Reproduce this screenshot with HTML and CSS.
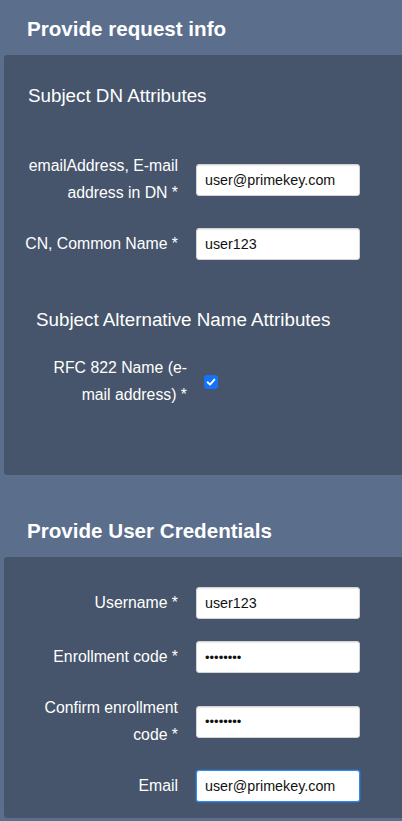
FILE: index.html
```html
<!DOCTYPE html>
<html lang="en">
<head>
<meta charset="utf-8">
<title>Request info</title>
<link rel="stylesheet" href="styles.css">
</head>
<body>
<h2 class="section-title">Provide request info</h2>
<div class="panel panel--request">
  <h3 class="group-title">Subject DN Attributes</h3>
  <div class="rows">
    <div class="row">
      <label class="label" for="f-email-dn">emailAddress, E-mail address in DN *</label>
      <input class="field" id="f-email-dn" type="text" value="user@primekey.com">
    </div>
    <div class="row">
      <label class="label" for="f-cn">CN, Common Name *</label>
      <input class="field" id="f-cn" type="text" value="user123">
    </div>
  </div>
  <h3 class="group-title group-title--alt">Subject Alternative Name Attributes</h3>
  <div class="row row--check">
    <label class="label">RFC 822 Name (e-mail address) *</label>
    <span class="checkbox"><svg width="14" height="14" viewBox="0 0 14 14"><path d="M3.6 7.3 L6 9.6 L10.4 4.6" fill="none" stroke="#fff" stroke-width="1.9" stroke-linecap="round" stroke-linejoin="round"/></svg></span>
  </div>
</div>

<h2 class="section-title">Provide User Credentials</h2>
<div class="panel panel--creds">
  <div class="rows">
    <div class="row">
      <label class="label" for="f-user">Username *</label>
      <input class="field" id="f-user" type="text" value="user123">
    </div>
    <div class="row">
      <label class="label" for="f-code">Enrollment code *</label>
      <input class="field field--secret" id="f-code" type="password" value="12345678">
    </div>
    <div class="row">
      <label class="label" for="f-code2">Confirm enrollment code *</label>
      <input class="field field--secret" id="f-code2" type="password" value="12345678">
    </div>
    <div class="row">
      <label class="label" for="f-mail">Email</label>
      <input class="field field--focus" id="f-mail" type="text" value="user@primekey.com">
    </div>
  </div>
</div>
</body>
</html>
```
FILE: styles.css
```css
html, body {
  margin: 0;
  padding: 0;
}
body {
  background: #5b6f8d;
  font-family: "Liberation Sans", Arial, sans-serif;
  color: #ffffff;
  overflow: hidden;
}
.section-title {
  margin: 0;
  padding: 17px 0 14px 27px;
  font-size: 20.6px;
  line-height: 24px;
  font-weight: bold;
  color: #ffffff;
}
.panel {
  margin-left: 4px;
  background: #46556b;
  border-radius: 3px 0 0 3px;
}
.panel--request {
  padding: 30px 0 67px 0;
  margin-bottom: 27px;
}
.panel--creds {
  padding: 30px 0 16px 0;
}
.group-title {
  margin: 0 0 46px 24px;
  font-size: 18.8px;
  line-height: 22px;
  font-weight: normal;
}
.group-title--alt {
  margin: 49px 0 24px 32px;
}
.rows {
  display: flex;
  flex-direction: column;
  gap: 22px;
}
.row {
  display: flex;
  align-items: center;
  padding-left: 20px;
}
.label {
  width: 154px;
  margin-right: 18px;
  text-align: right;
  font-size: 15.8px;
  line-height: 26.5px;
}
.row--check .label {
  width: 159px;
  margin-left: 4px;
  margin-right: 17px;
}
.field {
  box-sizing: border-box;
  width: 164px;
  height: 32px;
  margin: 0;
  padding: 0 8px;
  border: 1px solid #d4d4d4;
  border-radius: 3px;
  background: #ffffff;
  box-shadow: inset 0 1px 1px rgba(0, 0, 0, 0.08);
  font-family: "Liberation Sans", Arial, sans-serif;
  font-size: 14.3px;
  color: #111111;
  outline: none;
}
.field--secret {
  font-size: 13px;
}
.field--focus {
  border-color: #2a8cf2;
  box-shadow: 0 0 0 0.5px rgba(42, 140, 242, 0.6);
}
.checkbox {
  display: inline-flex;
  width: 14px;
  height: 14px;
  border-radius: 3px;
  background: #1672f7;
}
```
